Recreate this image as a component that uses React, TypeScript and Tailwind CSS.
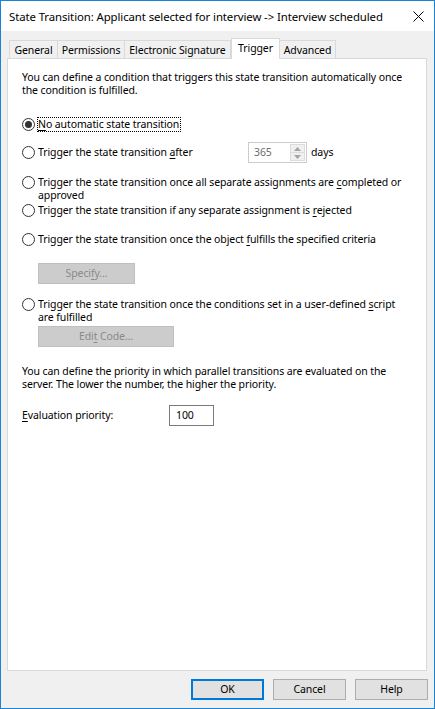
import React from 'react';

const font = "font-['Noto_Sans',sans-serif]";

const Radio: React.FC<{ checked?: boolean }> = ({ checked }) => (
  <span className="flex h-[13px] w-[13px] shrink-0 items-center justify-center rounded-full border border-[#333333] bg-white">
    {checked && <span className="h-[7px] w-[7px] rounded-full bg-[#333333]" />}
  </span>
);

const U: React.FC<{ children: React.ReactNode }> = ({ children }) => (
  <span className="underline decoration-1 underline-offset-2">{children}</span>
);

const Tab: React.FC<{ label: string; width: string; selected?: boolean; first?: boolean }> = ({
  label,
  width,
  selected,
  first,
}) =>
  selected ? (
    <div
      className={`relative z-10 -mb-px flex h-[21px] items-start justify-center whitespace-nowrap border border-b-0 border-[#d9d9d9] bg-white pt-[3px] ${width}`}
    >
      {label}
    </div>
  ) : (
    <div
      className={`flex h-[18px] items-center justify-center whitespace-nowrap border border-b-0 border-[#d9d9d9] bg-[#f0f0f0] pt-px ${first ? '' : '-ml-px'} ${width}`}
    >
      {label}
    </div>
  );

const DisabledButton: React.FC<{ width: string; children: React.ReactNode }> = ({ width, children }) => (
  <div
    className={`ml-[16px] flex h-[21px] items-center justify-center border border-[#bfbfbf] bg-[#cccccc] text-[#8a8a8a] ${width}`}
  >
    {children}
  </div>
);

export default function App() {
  return (
    <div
      className={`flex h-[709px] w-[435px] flex-col border border-[#1883d7] bg-[#f0f0f0] text-[10.5px] leading-[13px] tracking-[-0.1px] text-black ${font}`}
    >
      {/* Title bar */}
      <div className="flex h-[30px] shrink-0 items-center justify-between bg-white pl-[8px] pr-[10px]">
        <span className="whitespace-nowrap text-[11.4px]">
          State Transition: Applicant selected for interview -&gt; Interview scheduled
        </span>
        <svg width="11" height="11" viewBox="0 0 11 11" className="mt-px">
          <path d="M0.5 0.5 L10.5 10.5 M10.5 0.5 L0.5 10.5" stroke="#000" strokeWidth="1" />
        </svg>
      </div>

      {/* Tabs */}
      <div className="mt-[7px] flex h-[20px] shrink-0 items-end pl-[8px]">
        <Tab label="General" width="w-[49px]" first />
        <Tab label="Permissions" width="w-[68px]" />
        <Tab label="Electronic Signature" width="w-[107px]" />
        <Tab label="Trigger" width="w-[49px]" selected />
        <Tab label="Advanced" width="w-[57px] -ml-px" />
      </div>

      {/* Panel */}
      <div className="ml-[6px] mr-[7px] flex h-[613px] shrink-0 flex-col border border-[#d9d9d9] bg-white pl-[14px] pt-[12px]">
        <p className="whitespace-nowrap">
          You can define a condition that triggers this state transition automatically once
          <br />
          the condition is fulfilled.
        </p>

        <div className="mt-[20px] flex h-[15px] items-center">
          <Radio checked />
          <span className="ml-[2px] border border-dotted border-black pr-px leading-[13px]">
            <U>N</U>o automatic state transition
          </span>
        </div>

        <div className="mt-[10px] flex h-[21px] items-center">
          <Radio />
          <span className="ml-[3px] w-[210px]">
            Trigger the state transition <U>a</U>fter
          </span>
          <div className="flex h-[21px] w-[59px] items-stretch border border-[#cccccc] bg-white">
            <span className="flex flex-1 items-center pl-[5px] text-[#6d6d6d]">365</span>
            <div className="my-px mr-px flex w-[15px] flex-col">
              <div className="flex flex-1 items-center justify-center border border-[#dcdcdc] bg-[#f0f0f0]">
                <svg width="7" height="4" viewBox="0 0 7 4">
                  <path d="M3.5 0 L7 4 L0 4 Z" fill="#a3a3a3" />
                </svg>
              </div>
              <div className="flex flex-1 items-center justify-center border border-t-0 border-[#dcdcdc] bg-[#f0f0f0]">
                <svg width="7" height="4" viewBox="0 0 7 4">
                  <path d="M0 0 L7 0 L3.5 4 Z" fill="#a3a3a3" />
                </svg>
              </div>
            </div>
          </div>
          <span className="ml-[4px]">days</span>
        </div>

        <div className="mt-[13px] flex items-start">
          <Radio />
          <span className="ml-[3px] whitespace-nowrap">
            Trigger the state transition once all separate assignments are <U>c</U>ompleted or
            <br />
            approved
          </span>
        </div>

        <div className="mt-[2px] flex items-start">
          <Radio />
          <span className="ml-[3px] whitespace-nowrap">
            Trigger the state transition if any separate assignment is <U>r</U>ejected
          </span>
        </div>

        <div className="mt-[16px] flex items-start">
          <Radio />
          <span className="ml-[3px] whitespace-nowrap">
            Trigger the state transition once the object <U>f</U>ulfills the specified criteria
          </span>
        </div>

        <div className="mt-[17px]">
          <DisabledButton width="w-[97px]">
            <span>
              Speci<U>f</U>y...
            </span>
          </DisabledButton>
        </div>

        <div className="mt-[14px] flex items-start">
          <Radio />
          <span className="ml-[3px] whitespace-nowrap">
            Trigger the state transition once the conditions set in a user-defined <U>s</U>cript
            <br />
            are fulfilled
          </span>
        </div>

        <div className="mt-[2px]">
          <DisabledButton width="w-[136px]">
            <span>
              Edi<U>t</U> Code...
            </span>
          </DisabledButton>
        </div>

        <p className="mt-[18px] whitespace-nowrap">
          You can define the priority in which parallel transitions are evaluated on the
          <br />
          server. The lower the number, the higher the priority.
        </p>

        <div className="mt-[14px] flex h-[21px] items-center">
          <span className="w-[147px]">
            <U>E</U>valuation priority:
          </span>
          <div className="flex h-[21px] w-[45px] items-center border border-[#7a7a7a] bg-white pl-[6px]">100</div>
        </div>
      </div>

      {/* Footer buttons */}
      <div className="mt-[8px] flex h-[21px] shrink-0 justify-end gap-[9px] pr-[6px]">
        <button className="flex w-[73px] items-center justify-center border-2 border-[#0078d7] bg-[#e1e1e1]">OK</button>
        <button className="flex w-[73px] items-center justify-center border border-[#adadad] bg-[#e1e1e1]">Cancel</button>
        <button className="flex w-[73px] items-center justify-center border border-[#adadad] bg-[#e1e1e1]">Help</button>
      </div>
    </div>
  );
}
